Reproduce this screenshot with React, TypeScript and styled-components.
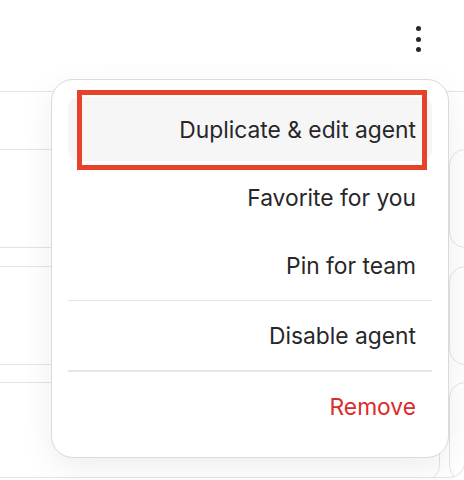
import styled, { createGlobalStyle } from "styled-components";

const GlobalStyle = createGlobalStyle`
  html, body {
    margin: 0;
    padding: 0;
    background: #ffffff;
    overflow: hidden;
  }
  body {
    font-family: Inter, "Noto Sans", sans-serif;
  }
`;

const Page = styled.div`
  position: relative;
  width: 464px;
  height: 480px;
  overflow: hidden;
  background: #ffffff;
`;

const Header = styled.div`
  height: 92px;
  border-bottom: 1.5px solid #e4e4e7;
  display: flex;
  justify-content: flex-end;
  align-items: flex-start;
  padding: 26px 40px 0 0;
  box-sizing: border-box;
`;

const KebabButton = styled.button`
  border: none;
  background: transparent;
  padding: 0;
  width: 12px;
  height: 26px;
  display: flex;
  flex-direction: column;
  align-items: center;
  justify-content: space-between;
  cursor: pointer;
`;

const Dot = styled.span`
  width: 5px;
  height: 5px;
  border-radius: 50%;
  background: #27272a;
`;

const Panel = styled.div`
  width: 495px;
  height: 386px;
  margin-left: -30px;
  box-sizing: border-box;
  border-right: 1.5px solid #e4e4e7;
  border-bottom: 1.5px solid #e4e4e7;
  border-bottom-right-radius: 16px;
  overflow: hidden;
  padding-top: 57px;
`;

const CardGrid = styled.div`
  display: grid;
  grid-template-columns: 470px 200px;
  grid-auto-rows: 99px;
  column-gap: 9px;
  row-gap: 17.5px;
`;

const Card = styled.div`
  border: 1.5px solid #e4e4e7;
  border-radius: 16px;
  background: #ffffff;
  box-sizing: border-box;
`;

const Menu = styled.div`
  position: absolute;
  top: 79px;
  left: 51px;
  width: 398px;
  box-sizing: border-box;
  background: #ffffff;
  border: 1.5px solid #d9d9de;
  border-radius: 22px;
  box-shadow: 0 10px 34px rgba(0, 0, 0, 0.07);
  padding: 17px 16px 19px;
  display: flex;
  flex-direction: column;
  gap: 4px;
`;

const Item = styled.div<{ $active?: boolean; $danger?: boolean }>`
  position: relative;
  height: 64px;
  display: flex;
  align-items: center;
  justify-content: flex-end;
  padding-right: 16px;
  border-radius: 10px;
  background: ${(p) => (p.$active ? "#f6f6f6" : "transparent")};
  color: ${(p) => (p.$danger ? "#dc2b2b" : "#27272a")};
  font-size: 22.8px;
  font-weight: 400;
  cursor: pointer;
`;

const Divider = styled.div`
  height: 1.5px;
  background: #e6e6e8;
  margin: -1.5px 0;
`;

const Highlight = styled.div`
  position: absolute;
  top: -7px;
  bottom: -9px;
  left: 9px;
  right: 5px;
  border: 5px solid #e8412b;
  pointer-events: none;
`;

export default function App() {
  return (
    <Page>
      <GlobalStyle />
      <Header>
        <KebabButton aria-label="More">
          <Dot />
          <Dot />
          <Dot />
        </KebabButton>
      </Header>
      <Panel>
        <CardGrid>
          <Card />
          <Card />
          <Card />
          <Card />
          <Card />
          <Card />
        </CardGrid>
      </Panel>
      <Menu>
        <Item $active>
          Duplicate &amp; edit agent
          <Highlight />
        </Item>
        <Item>Favorite for you</Item>
        <Item>Pin for team</Item>
        <Divider />
        <Item>Disable agent</Item>
        <Divider />
        <Item $danger>Remove</Item>
      </Menu>
    </Page>
  );
}
